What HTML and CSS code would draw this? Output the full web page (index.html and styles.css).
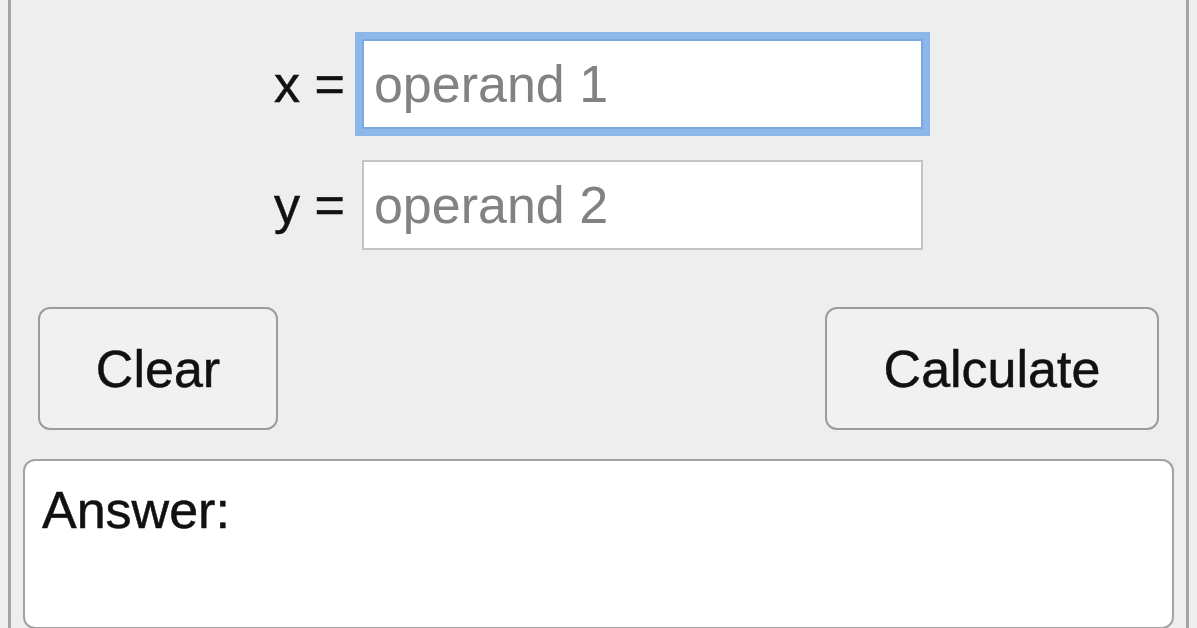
FILE: index.html
```html
<!DOCTYPE html>
<html lang="en">
<head>
<meta charset="utf-8">
<title>Calculator</title>
<link rel="stylesheet" href="styles.css">
</head>
<body>
<div class="panel">
  <div class="operands">
    <label class="op-label" for="x">x =</label>
    <input class="op-input focused" id="x" type="text" placeholder="operand 1">
    <label class="op-label" for="y">y =</label>
    <input class="op-input" id="y" type="text" placeholder="operand 2">
  </div>
  <div class="actions">
    <button class="btn btn-clear" type="button">Clear</button>
    <button class="btn btn-calc" type="button">Calculate</button>
  </div>
  <div class="answer">Answer:</div>
</div>
</body>
</html>
```
FILE: styles.css
```css
html, body {
  height: 100%;
}
body {
  margin: 0 8px;
  background: #efefef;
  font-family: "Liberation Sans", Arial, sans-serif;
  font-size: 52px;
  color: #111111;
  overflow: hidden;
}
.panel {
  box-sizing: border-box;
  height: 100%;
  background: #eeeeee;
  border-left: 3px solid #a4a4a4;
  border-right: 3px solid #a4a4a4;
  padding-top: 39px;
}
.operands {
  display: grid;
  grid-template-columns: auto 561px;
  justify-content: center;
  align-items: center;
  column-gap: 17px;
  row-gap: 31px;
}
.op-label {
  text-align: right;
  line-height: 60px;
  -webkit-text-stroke: 0.5px #111111;
}
.op-input {
  box-sizing: border-box;
  width: 561px;
  height: 90px;
  margin: 0;
  padding: 0 10px;
  border: 2px solid #c4c4c4;
  border-radius: 0;
  background: #ffffff;
  font-family: inherit;
  font-size: 52px;
  color: #111111;
  outline: none;
}
.op-input::placeholder {
  color: #828282;
}
.op-input.focused {
  border-color: #7aa8e2;
  box-shadow: 0 0 0 7px #8db6e9;
}
.actions {
  display: flex;
  justify-content: space-between;
  margin-top: 57px;
  padding: 0 27px;
}
.btn {
  box-sizing: border-box;
  height: 123px;
  margin: 0;
  padding: 0;
  border: 2px solid #9c9c9c;
  border-radius: 12px;
  background: #f1f1f1;
  font-family: inherit;
  font-size: 52px;
  color: #111111;
  -webkit-text-stroke: 0.5px #111111;
}
.btn-clear {
  width: 240px;
}
.btn-calc {
  width: 334px;
}
.answer {
  box-sizing: border-box;
  height: 170px;
  margin: 29px 12px 0;
  padding: 19px 17px;
  border: 2px solid #a2a2a2;
  border-radius: 12px;
  background: #ffffff;
  line-height: 60px;
  color: #111111;
  -webkit-text-stroke: 0.5px #111111;
}
```
